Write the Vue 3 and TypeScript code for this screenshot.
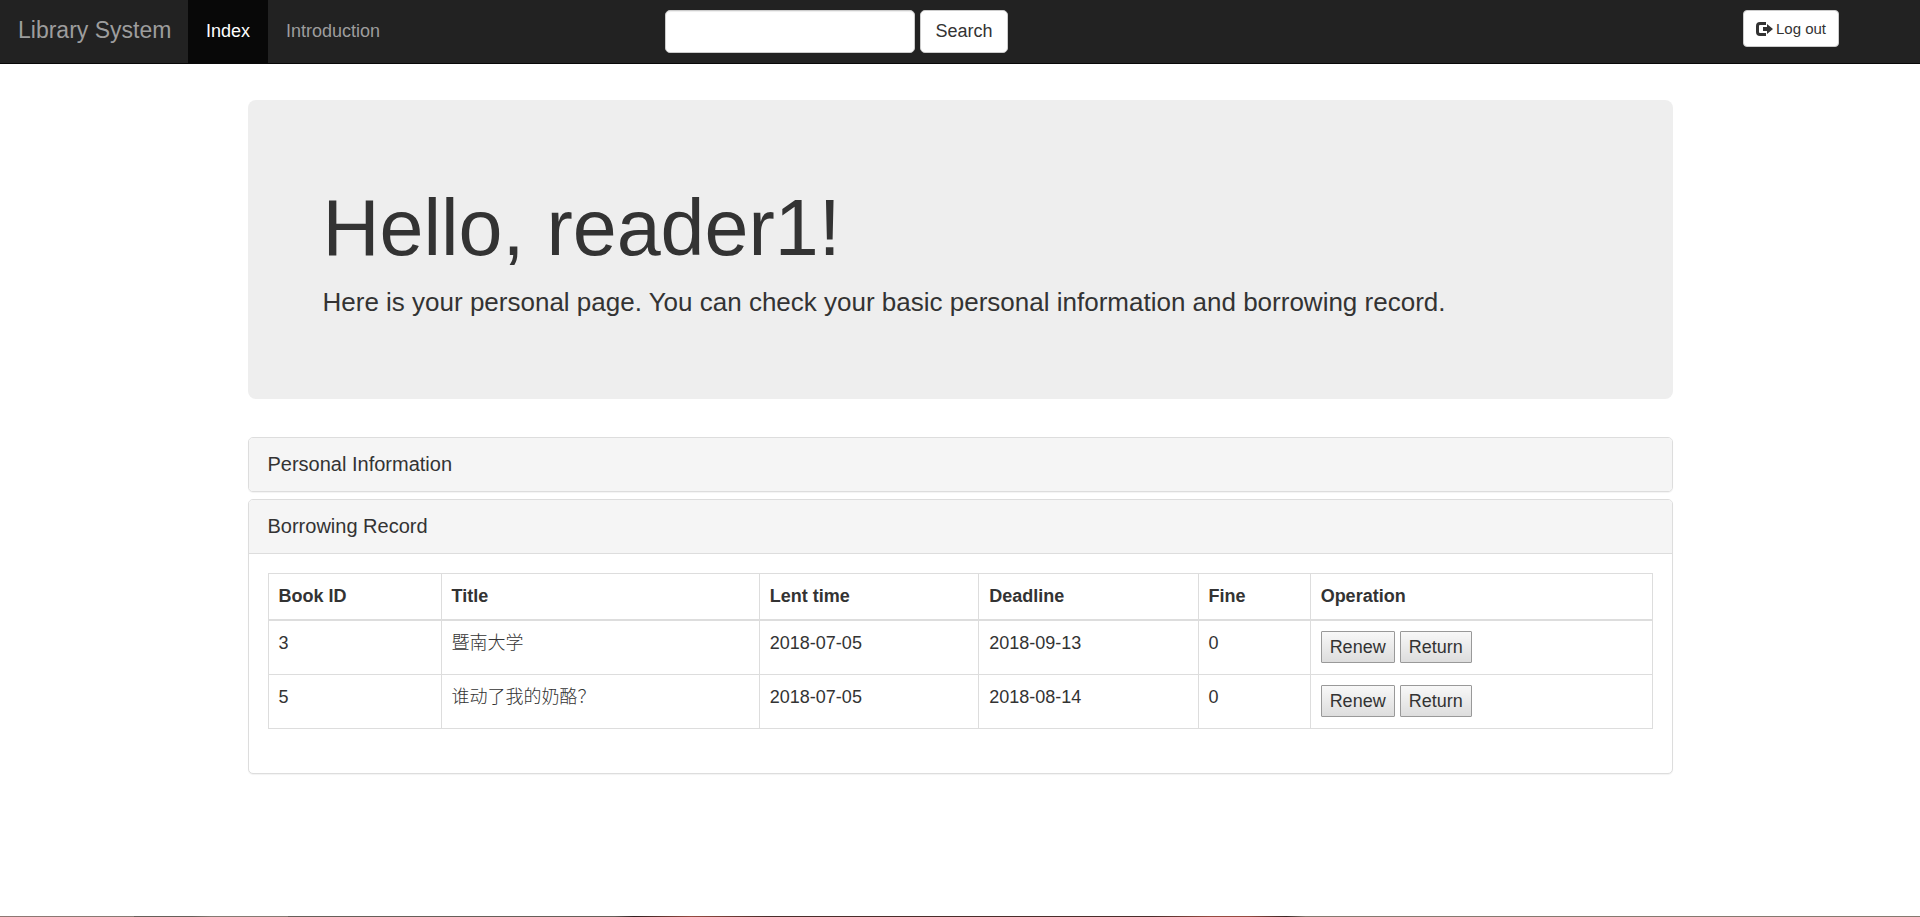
<script setup lang="ts">
import { ref } from 'vue'

interface Loan {
  id: number
  title: string
  lent: string
  deadline: string
  fine: number
}

const query = ref('')
const userName = 'reader1'
const columns: string[] = ['Book ID', 'Title', 'Lent time', 'Deadline', 'Fine', 'Operation']
const loans: Loan[] = [
  { id: 3, title: '暨南大学', lent: '2018-07-05', deadline: '2018-09-13', fine: 0 },
  { id: 5, title: '谁动了我的奶酪？', lent: '2018-07-05', deadline: '2018-08-14', fine: 0 },
]
</script>

<template>
  <div class="page">
    <nav class="navbar">
      <a class="brand" href="#">Library System</a>
      <a class="nav-link active" href="#" aria-current="page">Index</a>
      <a class="nav-link" href="#introduction">Introduction</a>
      <form class="search" @submit.prevent>
        <input v-model="query" class="search-input" type="text" aria-label="Search books" />
        <button class="btn search-btn" type="submit">Search</button>
      </form>
      <button class="btn logout" type="button">
        <svg class="logout-icon" viewBox="0 0 17 14" aria-hidden="true">
          <path d="M10 1.500H4Q1.500 1.500 1.500 4v6q0 2.500 2.500 2.500H10" fill="none" stroke="currentColor" stroke-width="3" />
          <path d="M7 5h4V2l6 5-6 5V9H7z" fill="currentColor" />
        </svg>
        <span>Log out</span>
      </button>
    </nav>

    <main class="container">
      <header class="hero">
        <h1>Hello, {{ userName }}!</h1>
        <p>Here is your personal page. You can check your basic personal information and borrowing record.</p>
      </header>

      <section class="panel">
        <h4 class="panel-heading"><a href="#personal">Personal Information</a></h4>
      </section>

      <section id="record" class="panel">
        <h4 class="panel-heading open"><a href="#record">Borrowing Record</a></h4>
        <div class="panel-body">
          <table class="loans">
            <colgroup>
              <col class="col-id" />
              <col class="col-title" />
              <col class="col-date" />
              <col class="col-date" />
              <col class="col-fine" />
              <col />
            </colgroup>
            <thead>
              <tr>
                <th v-for="name in columns" :key="name" scope="col">{{ name }}</th>
              </tr>
            </thead>
            <tbody>
              <tr v-for="loan in loans" :key="loan.id">
                <td>{{ loan.id }}</td>
                <td class="title" lang="zh-CN">{{ loan.title }}</td>
                <td>{{ loan.lent }}</td>
                <td>{{ loan.deadline }}</td>
                <td>{{ loan.fine }}</td>
                <td>
                  <div class="actions">
                    <button type="button" class="action">Renew</button>
                    <button type="button" class="action">Return</button>
                  </div>
                </td>
              </tr>
            </tbody>
          </table>
        </div>
      </section>
    </main>
    <div class="bottom-strip"></div>
  </div>
</template>

<style>
body {
  margin: 0;
  background: #fff;
}
</style>

<style scoped>
.page,
.page * {
  box-sizing: border-box;
}
.page {
  display: flex;
  flex-direction: column;
  min-height: 100vh;
  font-family: "Liberation Sans", Arial, "Noto Sans CJK SC", sans-serif;
  font-size: 18px;
  line-height: 25px;
  color: #333;
}
a {
  color: inherit;
  text-decoration: none;
}
button,
input {
  font-family: inherit;
  color: #333;
}
.navbar {
  display: flex;
  align-items: flex-start;
  background: #222;
  border-bottom: 1px solid #080808;
}
.brand {
  width: 188px;
  padding: 18px 0 18px 18px;
  font-size: 23px;
  color: #9d9d9d;
  white-space: nowrap;
}
.nav-link {
  padding: 19px 18px;
  color: #9d9d9d;
}
.nav-link.active {
  color: #fff;
  background: #080808;
}
.search {
  display: flex;
  gap: 5px;
  margin: 10px 0 0 13.9%;
}
.search-input {
  width: 250px;
  height: 43px;
  padding: 8px 15px;
  border: 1px solid #ccc;
  border-radius: 5px;
  background: #fff;
  font-size: 18px;
  box-shadow: inset 0 1px 1px rgba(0, 0, 0, 0.075);
}
.btn {
  border: 1px solid #ccc;
  border-radius: 5px;
  background: #fff;
  cursor: pointer;
}
.search-btn {
  width: 88px;
  height: 43px;
  padding: 0;
  font-size: 18px;
}
.logout {
  display: flex;
  align-items: center;
  gap: 3px;
  height: 37px;
  margin: 10px 81px 0 auto;
  padding: 0 12px;
  border-radius: 4px;
  font-size: 15px;
}
.logout-icon {
  width: 17px;
  height: 14px;
}
.container {
  width: 100%;
  max-width: 1463px;
  margin: 36px auto 0;
  padding: 0 19px;
}
.hero {
  margin-bottom: 38px;
  padding: 84px 75px 78px;
  border-radius: 8px;
  background: #eee;
}
.hero h1 {
  margin: 0 0 13px;
  font-size: 79px;
  line-height: 87px;
  font-weight: 500;
}
.hero p {
  margin: 0;
  font-size: 26px;
  line-height: 37px;
}
.panel {
  border: 1px solid #ddd;
  border-radius: 5px;
  background: #fff;
  box-shadow: 0 1px 1px rgba(0, 0, 0, 0.05);
}
.panel + .panel {
  margin-top: 7px;
}
.panel-heading {
  margin: 0;
  padding: 12px 19px;
  border-radius: 4px;
  background: #f5f5f5;
  font-size: 20px;
  line-height: 29px;
  font-weight: 500;
}
.panel-heading.open {
  border-bottom: 1px solid #ddd;
  border-radius: 4px 4px 0 0;
}
.panel-body {
  padding: 19px 19px 44px;
}
.loans {
  width: 100%;
  table-layout: fixed;
  border-collapse: collapse;
}
.col-id {
  width: 12.5%;
}
.col-title {
  width: 23%;
}
.col-date {
  width: 15.85%;
}
.col-fine {
  width: 8.1%;
}
.loans th,
.loans td {
  padding: 10px;
  border: 1px solid #ddd;
  text-align: left;
  vertical-align: top;
}
.loans th {
  border-bottom-width: 2px;
}
.loans .title {
  font-weight: 300;
}
.actions {
  display: flex;
  gap: 5px;
  padding-bottom: 1px;
}
.action {
  height: 32px;
  padding: 0 8px;
  border: 1px solid #999;
  border-radius: 1px;
  background: linear-gradient(#f8f8f8, #ddd);
  font-size: 18px;
}
.bottom-strip {
  height: 1px;
  margin-top: auto;
  background: linear-gradient(90deg, #8f7672 0%, #857a72 7%, #665f59 7%, #665f59 10%, #857a72 11%, #857a72 15%, #665f59 15%, #665f59 32%, #301f1f 33%, #964b40 36%, #4a2d2a 40%, #4a2d2a 60%, #964b40 63%, #964b40 65%, #3a2522 67%, #85796f 68%, #85796f 100%);
}
</style>
